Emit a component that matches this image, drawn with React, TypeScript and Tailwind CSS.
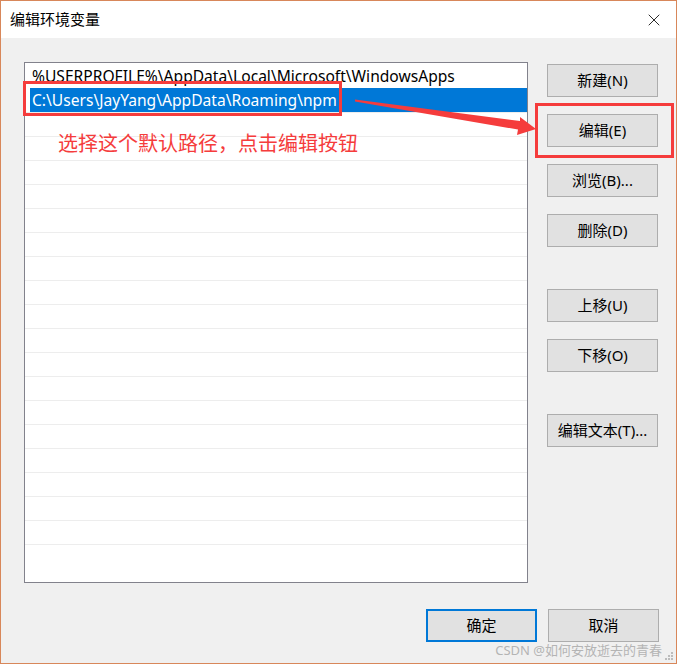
import { X } from 'lucide-react';

const font = { fontFamily: '"Noto Sans", "Noto Sans CJK SC", sans-serif' };

function Btn({ label, primary = false }: { label: string; primary?: boolean }) {
    return (
        <button
            className={`w-[111px] h-[33px] flex items-center justify-center bg-[#e1e1e1] text-[15px] text-black ${primary ? 'border-2 border-[#0078d7]' : 'border border-[#adadad]'
                }`}
        >
            {label}
        </button>
    );
}

const rows = [
    '%USERPROFILE%\\AppData\\Local\\Microsoft\\WindowsApps',
    'C:\\Users\\JayYang\\AppData\\Roaming\\npm',
];

export default function App() {
    const empty = Array.from({ length: 19 });

    return (
        <div
            className="relative w-[677px] h-[664px] border border-[#d8875a] bg-[#f0f0f0] flex flex-col overflow-hidden"
            style={font}
        >
            {/* title bar */}
            <div className="h-[37px] bg-white flex items-center justify-between pl-[9px] pr-[12px] shrink-0">
                <span className="text-[15px] text-black">编辑环境变量</span>
                <X size={20} strokeWidth={1} className="text-black" />
            </div>

            {/* body */}
            <div className="flex pt-[24px] pl-[23px]">
                <div className="w-[504px] h-[521px] border border-[#82828c] bg-white flex flex-col overflow-hidden">
                    <div className="h-[25px] flex items-center pl-[7px] pt-[3px] text-[15.6px] text-black whitespace-nowrap">
                        {rows[0]}
                    </div>
                    <div className="h-[24px] flex pl-[5px]">
                        <div className="flex-1 bg-[#0078d7] text-white text-[15.6px] flex items-center pl-[2px] pt-[2px] whitespace-nowrap">
                            {rows[1]}
                        </div>
                    </div>
                    {empty.map((_, i) => (
                        <div key={i} className="h-[24px] shrink-0 border-t border-[#ededed]" />
                    ))}
                </div>

                <div className="ml-[19px] pt-[2px] flex flex-col">
                    <div className="flex flex-col gap-[17px]">
                        <Btn label="新建(N)" />
                        <Btn label="编辑(E)" />
                        <Btn label="浏览(B)..." />
                        <Btn label="删除(D)" />
                    </div>
                    <div className="mt-[42px] flex flex-col gap-[17px]">
                        <Btn label="上移(U)" />
                        <Btn label="下移(O)" />
                    </div>
                    <div className="mt-[42px]">
                        <Btn label="编辑文本(T)..." />
                    </div>
                </div>
            </div>

            {/* footer */}
            <div className="flex justify-end gap-[11px] pr-[17px] mt-[26px]">
                <Btn label="确定" primary />
                <Btn label="取消" />
            </div>

            {/* annotations */}
            <div className="absolute left-[22px] top-[80px] w-[319px] h-[35px] border-[3px] border-[#f53c3c]" />
            <div className="absolute left-[534px] top-[102px] w-[139px] h-[55px] border-[3px] border-[#f53c3c]" />
            <div className="absolute left-[57px] top-[128px] text-[20px] text-[#f53c3c] whitespace-nowrap">
                选择这个默认路径，点击编辑按钮
            </div>
            <svg className="absolute left-0 top-0" width="677" height="664">
                <polygon
                    points="354,98.5 519,120 519,116 535,128 516,134 517,128.5 354,100.5"
                    fill="#f53c3c"
                />
            </svg>

            {/* watermark */}
            <div className="absolute right-[14px] top-[640px] text-[13px] text-[#b4b4b4] whitespace-nowrap">
                CSDN @如何安放逝去的青春
            </div>
            <div className="absolute right-[3px] bottom-[3px] grid grid-cols-3 gap-[1px]">
                {[0, 0, 1, 0, 1, 1, 1, 1, 1].map((v, i) => (
                    <div key={i} className={`w-[2px] h-[2px] ${v ? 'bg-[#bcbcbc]' : ''}`} />
                ))}
            </div>
        </div>
    );
}
